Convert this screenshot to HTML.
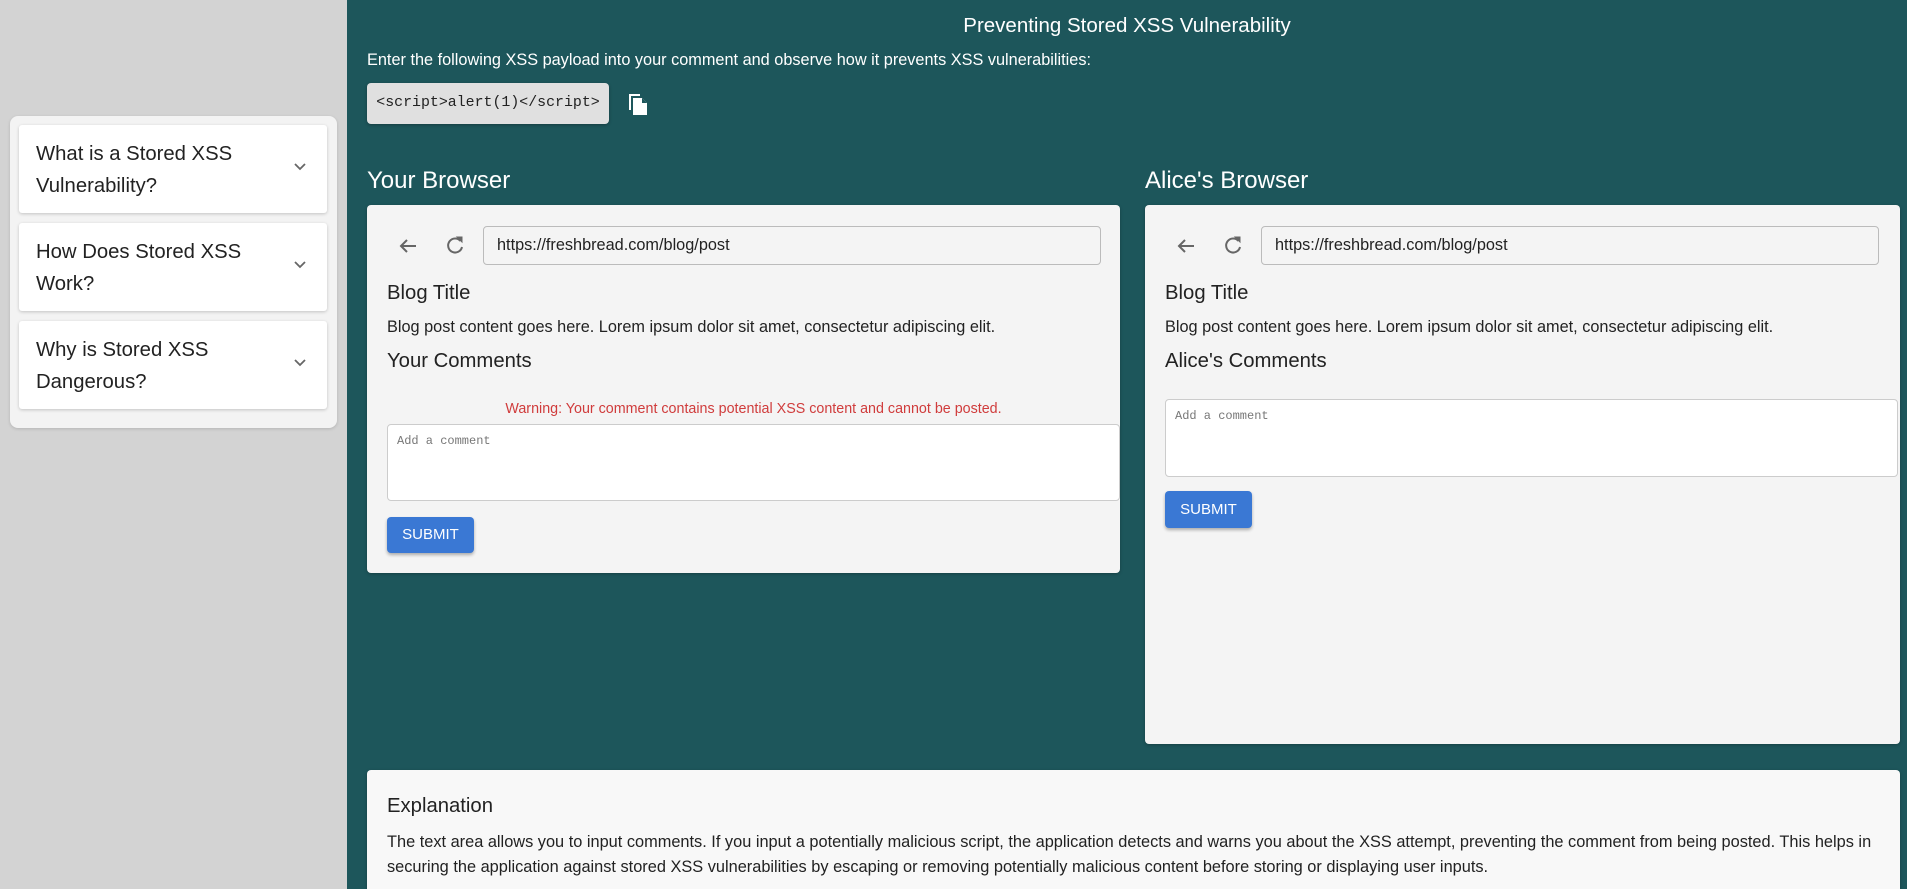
<!DOCTYPE html>
<html style="width:1907px;height:889px;overflow:hidden"><head><meta charset="utf-8"><style>
*{box-sizing:border-box;margin:0;padding:0}
body{width:1907px;height:889px;overflow:hidden;font-family:"Liberation Sans",Arial,sans-serif;background:#1d565b;position:relative;color:#222}
.side{position:absolute;left:0;top:0;width:347px;height:889px;background:#d3d3d3}
.panel{position:absolute;left:10px;top:116px;width:327px;height:312px;background:#f3f3f3;border-radius:8px;box-shadow:0 1px 3px rgba(0,0,0,.15)}
.acc{position:absolute;left:9px;width:308px;height:88px;background:#fff;box-shadow:0 1px 3px rgba(0,0,0,.2);border-radius:3px;padding:13px 17px;font-size:20.3px;line-height:32px;color:#222}
.acc svg{position:absolute;right:20px;top:37px}
.abs{position:absolute}
.card{position:absolute;background:#f4f4f4;border-radius:4px;box-shadow:0 1px 3px rgba(0,0,0,.25)}
.url{position:absolute;border:1px solid #bbb;border-radius:4px;background:#f4f4f4;font-size:16.3px;padding:0 13px;line-height:37px;color:#222}
.ta{position:absolute;background:#fff;border:1px solid #ccc;border-radius:4px;font-family:"Liberation Mono",monospace;font-size:12px;color:#777;padding:9px 9px}
.btn{position:absolute;background:#3a78d4;color:#fff;font-size:15px;border-radius:4px;text-align:center;box-shadow:0 2px 3px rgba(0,0,0,.3)}
</style></head><body>
<div class="side"><div class="panel">
<div class="acc" style="top:9px">What is a Stored XSS<br>Vulnerability?<svg width="14" height="9" viewBox="0 0 14 9"><path d="M2 2l5 5 5-5" fill="none" stroke="#666" stroke-width="1.8"/></svg></div>
<div class="acc" style="top:107px">How Does Stored XSS<br>Work?<svg width="14" height="9" viewBox="0 0 14 9"><path d="M2 2l5 5 5-5" fill="none" stroke="#666" stroke-width="1.8"/></svg></div>
<div class="acc" style="top:205px">Why is Stored XSS<br>Dangerous?<svg width="14" height="9" viewBox="0 0 14 9"><path d="M2 2l5 5 5-5" fill="none" stroke="#666" stroke-width="1.8"/></svg></div>
</div></div>

<div class="abs" style="left:347px;width:1560px;top:14px;text-align:center;color:#fff;font-size:20.5px">Preventing Stored XSS Vulnerability</div>
<div class="abs" style="left:367px;top:51px;color:#fff;font-size:16.3px">Enter the following XSS payload into your comment and observe how it prevents XSS vulnerabilities:</div>
<div class="abs" style="left:367px;top:83px;width:242px;height:41px;background:#e0e0e0;border-radius:4px;font-family:'Liberation Mono',monospace;font-size:14.9px;line-height:41px;text-align:center;color:#222;box-shadow:0 1px 3px rgba(0,0,0,.3)">&lt;script&gt;alert(1)&lt;/script&gt;</div>
<svg class="abs" style="left:627px;top:92px" width="22" height="24" viewBox="0 0 22 24"><path d="M2 2h11v2H4v14H2z" fill="#fff"/><path d="M6 6h9l5 5v12H6z" fill="#fff"/><path d="M15 6v5h5" fill="#1d565b"/></svg>

<div class="abs" style="left:367px;top:167px;color:#fff;font-size:24px">Your Browser</div>
<div class="abs" style="left:1145px;top:167px;color:#fff;font-size:24px">Alice's Browser</div>

<div class="card" style="left:367px;top:205px;width:753px;height:368px">
<svg class="abs" style="left:31px;top:32px" width="20" height="18" viewBox="0 0 20 18"><path d="M18 9H3M9 3L3 9l6 6" fill="none" stroke="#666" stroke-width="2"/></svg>
<svg class="abs" style="left:79px;top:31px" width="18" height="19" viewBox="0 0 18 19"><path d="M14.5 5A7 7 0 1 0 16 11" fill="none" stroke="#666" stroke-width="2"/><path d="M11 1h5v5z" fill="#666" stroke="#666"/></svg>
<div class="url" style="left:116px;top:21px;width:618px;height:39px">https://freshbread.com/blog/post</div>
<div class="abs" style="left:20px;top:77px;font-size:20.3px">Blog Title</div>
<div class="abs" style="left:20px;top:113px;font-size:16.3px">Blog post content goes here. Lorem ipsum dolor sit amet, consectetur adipiscing elit.</div>
<div class="abs" style="left:20px;top:145px;font-size:20.3px">Your Comments</div>
<div class="abs" style="left:20px;width:733px;top:196px;text-align:center;font-size:14.3px;color:#d03c3c">Warning: Your comment contains potential XSS content and cannot be posted.</div>
<div class="ta" style="left:20px;top:219px;width:733px;height:77px">Add a comment</div>
<div class="btn" style="left:20px;top:312px;width:87px;height:36px;line-height:36px">SUBMIT</div>
</div>

<div class="card" style="left:1145px;top:205px;width:755px;height:539px">
<svg class="abs" style="left:31px;top:32px" width="20" height="18" viewBox="0 0 20 18"><path d="M18 9H3M9 3L3 9l6 6" fill="none" stroke="#666" stroke-width="2"/></svg>
<svg class="abs" style="left:79px;top:31px" width="18" height="19" viewBox="0 0 18 19"><path d="M14.5 5A7 7 0 1 0 16 11" fill="none" stroke="#666" stroke-width="2"/><path d="M11 1h5v5z" fill="#666" stroke="#666"/></svg>
<div class="url" style="left:116px;top:21px;width:618px;height:39px">https://freshbread.com/blog/post</div>
<div class="abs" style="left:20px;top:77px;font-size:20.3px">Blog Title</div>
<div class="abs" style="left:20px;top:113px;font-size:16.3px">Blog post content goes here. Lorem ipsum dolor sit amet, consectetur adipiscing elit.</div>
<div class="abs" style="left:20px;top:145px;font-size:20.3px">Alice's Comments</div>
<div class="ta" style="left:20px;top:194px;width:733px;height:78px">Add a comment</div>
<div class="btn" style="left:20px;top:286px;width:87px;height:37px;line-height:37px">SUBMIT</div>
</div>

<div class="card" style="left:367px;top:770px;width:1533px;height:140px;background:#f8f8f8">
<div class="abs" style="left:20px;top:25px;font-size:20.3px">Explanation</div>
<div class="abs" style="left:20px;top:60px;width:1510px;font-size:16.35px;line-height:25px">The text area allows you to input comments. If you input a potentially malicious script, the application detects and warns you about the XSS attempt, preventing the comment from being posted. This helps in securing the application against stored XSS vulnerabilities by escaping or removing potentially malicious content before storing or displaying user inputs.</div>
</div>
</body></html>
